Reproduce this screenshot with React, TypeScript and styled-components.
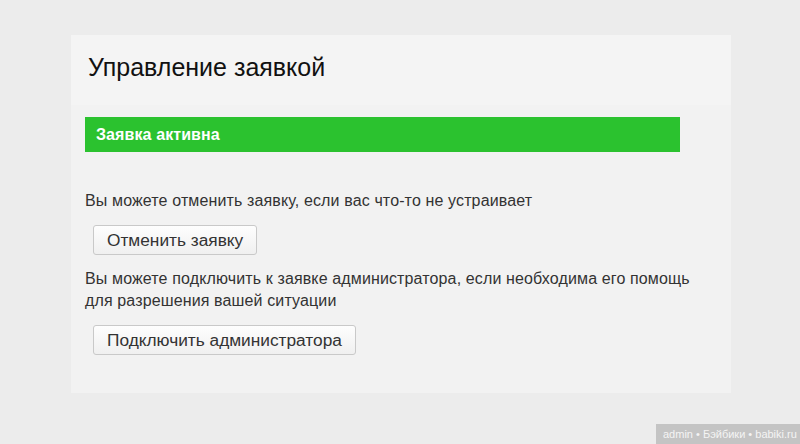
import React from 'react';
import styled, { createGlobalStyle } from 'styled-components';

const GlobalStyle = createGlobalStyle`
  html, body {
    margin: 0;
    padding: 0;
    background: #ececec;
    font-family: "Liberation Sans", Arial, sans-serif;
  }
`;

const Page = styled.div`
  height: 444px;
  padding: 35px 0 0 71px;
  box-sizing: border-box;
`;

const Panel = styled.section`
  width: 660px;
  background: #f3f3f3;
`;

const Header = styled.div`
  height: 70px;
  padding: 17px 0 0 17px;
  box-sizing: border-box;
  background: #f4f4f4;
`;

const Title = styled.h1`
  margin: 0;
  font-size: 25px;
  line-height: 30px;
  font-weight: normal;
  color: #111;
`;

const Body = styled.div`
  padding: 12px 14px 38px;
  background: #f2f2f2;
`;

const Status = styled.div`
  width: 595px;
  height: 35px;
  line-height: 35px;
  padding-left: 11px;
  box-sizing: border-box;
  background: #2bc22f;
  color: #fff;
  font-size: 16px;
  font-weight: bold;
  letter-spacing: 0.1px;
`;

const Text = styled.p<{ $top?: number }>`
  margin: ${p => p.$top ?? 13}px 0 0;
  font-size: 16px;
  line-height: 22px;
  letter-spacing: 0.13px;
  color: #333;
`;

const Action = styled.button`
  display: block;
  margin: 13px 0 0 8px;
  height: 30px;
  padding: 0 13px;
  border: 1px solid #c9c9c9;
  border-radius: 3px;
  background: linear-gradient(#fefefe, #f0f0f0);
  color: #333;
  font-family: "Liberation Sans", Arial, sans-serif;
  font-size: 17.3px;
  line-height: 28px;
  cursor: pointer;
`;

const Watermark = styled.div`
  position: fixed;
  right: 0;
  bottom: 0;
  width: 144px;
  height: 20px;
  line-height: 20px;
  padding-left: 7px;
  box-sizing: border-box;
  background: #c4c4c4;
  color: #f4f4f4;
  font-size: 11px;
  white-space: nowrap;
`;

const App: React.FC = () => {
  return (
    <>
      <GlobalStyle />
      <Page>
        <Panel>
          <Header>
            <Title>Управление заявкой</Title>
          </Header>
          <Body>
            <Status>Заявка активна</Status>
            <Text $top={38}>Вы можете отменить заявку, если вас что-то не устраивает</Text>
            <Action>Отменить заявку</Action>
            <Text>
              Вы можете подключить к заявке администратора, если необходима его помощь
              <br />
              для разрешения вашей ситуации
            </Text>
            <Action>Подключить администратора</Action>
          </Body>
        </Panel>
      </Page>
      <Watermark>admin • Бэйбики • babiki.ru</Watermark>
    </>
  );
};

export default App;
